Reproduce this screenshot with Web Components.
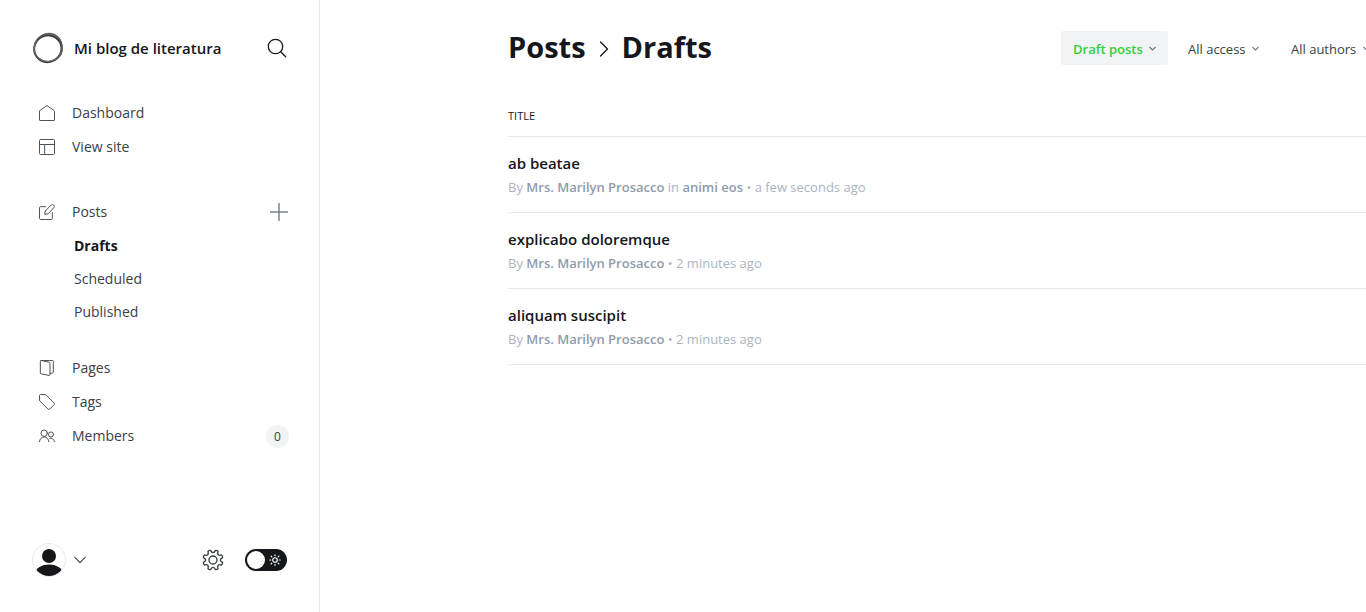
<!DOCTYPE html>
<html lang="es">
<head>
<meta charset="utf-8">
<meta name="viewport" content="width=device-width, initial-scale=1">
<title>Posts – Drafts</title>
<style>
  html, body { height: 100%; margin: 0; }
  body {
    --ink: #15171a; --text: #394047; --muted: #abb4be; --strong: #8e9cac;
    --line: #e6e9eb; --soft: #f1f3f4; --green: #30cf43;
    font-family: "Open Sans", "Noto Sans", sans-serif;
    font-size: 14px; line-height: 20px; color: var(--text); background: #fff;
    overflow: hidden;
  }
</style>
</head>
<body>
<admin-shell>
  <side-bar slot="side">
    <blog-brand slot="top">Mi blog de literatura</blog-brand>
    <nav-group>
      <nav-item icon="home">Dashboard</nav-item>
      <nav-item icon="layout">View site</nav-item>
    </nav-group>
    <nav-group>
      <nav-item icon="pen">Posts<add-button slot="end"></add-button></nav-item>
      <nav-item sub current>Drafts</nav-item>
      <nav-item sub>Scheduled</nav-item>
      <nav-item sub>Published</nav-item>
    </nav-group>
    <nav-group>
      <nav-item icon="pages">Pages</nav-item>
      <nav-item icon="tag">Tags</nav-item>
      <nav-item icon="members">Members<count-badge slot="end">0</count-badge></nav-item>
    </nav-group>
    <user-bar slot="bottom"></user-bar>
  </side-bar>
  <page-header>
    <filter-select slot="filters" active label="Draft posts" name="Type"></filter-select>
    <filter-select slot="filters" label="All access" name="Access"></filter-select>
    <filter-select slot="filters" label="All authors" name="Author"></filter-select>
  </page-header>
  <posts-table></posts-table>
</admin-shell>

<script>
const define = (name, html, setup) => {
  const template = document.createElement('template');
  template.innerHTML = html;
  customElements.define(name, class extends HTMLElement {
    connectedCallback() {
      if (this.shadowRoot) return;
      const root = this.attachShadow({ mode: 'open' });
      root.append(template.content.cloneNode(true));
      if (setup) setup(this, root);
    }
  });
};

const icons = {
  home: '<path d="M.75 9.8v12.7c0 .5.3.75.75.75h21c.5 0 .75-.3.75-.75V9.8c0-.7-.3-1.3-.9-1.8L12 .9 1.65 8c-.6.5-.9 1.1-.9 1.8z"/>',
  layout: '<rect x=".75" y=".75" width="22.5" height="22.5" rx="1.5"/><path d="M.75 8.25h22.5M8.5 8.25v15"/>',
  pen: '<path d="M10 4H2.25C1.4 4 .75 4.7.75 5.5v16.25c0 .8.7 1.5 1.5 1.5H18.5c.8 0 1.5-.7 1.5-1.5V13M13.6 14.7l-5 .8.8-5 9-9a2.6 2.6 0 0 1 3.8 0l.1.1a2.6 2.6 0 0 1 0 3.8z"/>',
  pages: '<path d="M3 .75h12.5l5 .1c.6 0 1 .4 1 1v16.3c0 .8-.5 1.4-1.3 1.5l-3.2.5M3 .75c-.6 0-1 .4-1 1v17.7c0 .7.4 1.2 1 1.3l12 2.4c.8.1 1.5-.4 1.5-1.2V5c0-.8-.5-1.4-1.2-1.6z"/>',
  tag: '<path d="M.75 9V2.25c0-.8.7-1.5 1.5-1.5H9c.7 0 1.3.3 1.8.8l11.9 12c.7.7.7 1.7 0 2.4l-6.7 6.7c-.7.7-1.7.7-2.4 0l-12-11.9C1 10.300.75 9.700.75 9z"/>',
  members: '<circle cx="7.800" cy="7.800" r="4.800"/><path d="M.75 20.500a7 7 0 0 1 14 0"/><circle cx="18" cy="9.700" r="3.800"/><path d="M16 15.300a5.800 5.800 0 0 1 7.250 5.200"/>'
};
const chevron = '<path d="M1 1l6 6 6-6"/>';

define('admin-shell', `
  <style>
    :host { display: grid; grid-template-columns: 320px minmax(0, 1fr); min-height: 100vh; }
    main { padding: 26px 0 0 188px; min-width: 0; overflow: hidden; }
    .content { margin-right: -16px; }
  </style>
  <slot name="side"></slot>
  <main><div class="content"><slot></slot></div></main>`);

define('side-bar', `
  <style>
    :host { display: flex; flex-direction: column; box-sizing: border-box;
      padding: 32px 32px 35px; border-right: 1px solid var(--line); }
    nav { display: flex; flex-direction: column; flex: 1; margin: 32px -2px 0 0; }
  </style>
  <slot name="top"></slot>
  <nav aria-label="Main"><slot></slot></nav>
  <slot name="bottom"></slot>`);

define('blog-brand', `
  <style>
    :host { display: flex; align-items: center; height: 32px; gap: 10px;
      font-size: 15px; font-weight: 600; color: var(--ink); }
    .name { flex: 1; white-space: nowrap; }
    button { display: flex; padding: 0; border: 0; background: none; color: var(--ink); }
    svg { display: block; fill: none; stroke: currentColor; }
  </style>
  <svg width="32" height="32" viewBox="0 0 32 32" aria-hidden="true">
    <path fill="#aaa" stroke="none" d="M11 3.500C18-.5 27 2 29.500 9c2 7 2 13-2 17 1.500-6 2-10 0-15C25 6 18 3 11 3.500z"/>
    <ellipse cx="15.500" cy="16.500" rx="13.800" ry="13.300" transform="rotate(-30 16 16)" stroke="#3c3c3c" stroke-width="2"/>
    <ellipse cx="16.500" cy="15.700" rx="14.200" ry="13.600" transform="rotate(-50 16 16)" stroke="#6a6a6a" stroke-width="1.200"/>
    <path stroke="#555" d="M6 7C13-1 26 0 29.500 11c2 7 0 12-4 15.500"/>
  </svg>
  <span class="name"><slot></slot></span>
  <button type="button" aria-label="Search">
    <svg width="20" height="20" viewBox="0 0 20 20" stroke-width="1.300"><circle cx="8.500" cy="8.500" r="7.200"/><path d="M13.700 13.700l5 5" stroke-linecap="round"/></svg>
  </button>`);

define('nav-group', `
  <style>
    :host { display: flex; flex-direction: column; }
    :host(:nth-of-type(2)) { margin-top: 31px; }
    :host(:nth-of-type(3)) { margin-top: 23px; }
  </style><slot></slot>`);

define('nav-item', `
  <style>
    :host { display: flex; align-items: center; height: 34px; }
    a { display: flex; flex: 1; align-items: center; gap: 17px; padding-left: 7px;
      color: var(--text); text-decoration: none; }
    svg { width: 16px; height: 16px; fill: none; stroke: #4b535b; stroke-width: 1.500;
      stroke-linecap: round; stroke-linejoin: round; }
    :host([sub]) { height: 33px; }
    :host([sub]) svg { display: none; }
    :host([sub]) a { padding-left: 42px; }
    :host([current]) a { font-weight: 700; color: var(--ink); }
  </style>
  <a href="#"><svg viewBox="0 0 24 24" aria-hidden="true"></svg><span><slot></slot></span></a>
  <slot name="end"></slot>`,
  (host, root) => {
    root.querySelector('svg').innerHTML = icons[host.getAttribute('icon')] || '';
    if (host.hasAttribute('current')) root.querySelector('a').setAttribute('aria-current', 'page');
  });

define('add-button', `
  <style>
    :host { display: block; }
    button { display: block; padding: 0; border: 0; background: none; }
    svg { display: block; stroke: #7c8289; stroke-width: 1.500; }
  </style>
  <button type="button" aria-label="New post"><svg width="20" height="18" viewBox="0 0 20 18"><path d="M10 0v18M1 9h18"/></svg></button>`);

define('count-badge', `
  <style>
    :host { display: block; min-width: 23px; border-radius: 12px; background: var(--soft);
      font-size: 12px; line-height: 23px; text-align: center; }
  </style><slot></slot>`);

define('user-bar', `
  <style>
    :host { display: flex; align-items: center; height: 34px; }
    button { display: flex; align-items: center; gap: 8px; padding: 0; border: 0; background: none; color: var(--text); }
    .gear { margin-left: auto; margin-right: 21px; }
    svg { display: block; }
    .stroke { fill: none; stroke: currentColor; stroke-linecap: round; stroke-linejoin: round; }
    label { display: grid; align-items: center; }
    input, label svg { grid-area: 1 / 1; }
    input { appearance: none; display: flex; align-items: center; box-sizing: border-box; width: 42px; height: 22px; margin: 0;
      padding: 2px; border-radius: 11px; background: var(--ink); }
    input::before { content: ""; width: 18px; height: 18px; border-radius: 50%; background: #fff; }
    input:checked { justify-content: flex-end; }
    label svg { justify-self: end; margin-right: 6px; pointer-events: none; color: #fff; }
  </style>
  <button type="button" aria-label="Account menu">
    <svg width="34" height="34" viewBox="0 0 34 34"><clipPath id="c"><circle cx="17" cy="17" r="16"/></clipPath>
      <circle cx="17" cy="17" r="16.500" fill="#fff" stroke="#e6e9eb"/>
      <g clip-path="url(#c)" fill="#15171a"><circle cx="17" cy="13" r="7"/><ellipse cx="17" cy="30" rx="13.500" ry="8.500"/></g></svg>
    <svg class="stroke" width="12" height="8" viewBox="0 0 14 8" stroke-width="1.300">${chevron}</svg>
  </button>
  <button type="button" class="gear" aria-label="Settings">
    <svg id="gear" class="stroke" width="22" height="22" viewBox="0 0 24 24" stroke-width="1.500"><path/><circle cx="12" cy="12" r="4.400"/></svg>
  </button>
  <label><input type="checkbox" role="switch" aria-label="Night shift">
    <svg class="stroke" width="12" height="12" viewBox="0 0 24 24" stroke-width="2.400"><circle cx="12" cy="12" r="4.500"/><path d="M12 1.500v2M12 20.500v2M1.500 12h2M20.500 12h2M4.200 4.200l1.500 1.500M18.300 18.300l1.500 1.500M4.200 19.800l1.500-1.500M18.300 5.700l1.500-1.500"/></svg>
  </label>`,
  (host, root) => {
    // Eight rounded teeth around the hub, joined by concave curves.
    const at = (r, deg) => {
      const a = deg * Math.PI / 180;
      return (12 + r * Math.sin(a)).toFixed(2) + ' ' + (12 - r * Math.cos(a)).toFixed(2);
    };
    let d = '';
    for (let i = 0; i < 8; i++) {
      const m = i * 45 + 22.5;
      d += (i ? 'L' : 'M') + at(10.8, m - 8) + 'Q' + at(11.6, m) + ' ' + at(10.8, m + 8) +
        'C' + at(7.4, m + 13) + ' ' + at(7.4, m + 32) + ' ' + at(10.8, m + 37);
    }
    root.querySelector('#gear path').setAttribute('d', d + 'Z');
  });

define('page-header', `
  <style>
    :host { display: flex; justify-content: space-between; height: 44px; }
    h1 { display: flex; align-items: center; gap: 13px; margin: 0; font-size: 29px; line-height: 40px; height: 42px; font-weight: 700; color: var(--ink); }
    h1 a { color: inherit; text-decoration: none; }
    svg { display: block; margin-top: 4px; fill: none; stroke: var(--ink); stroke-width: 1.300; stroke-linecap: round; stroke-linejoin: round; }
    div { display: flex; align-items: center; gap: 8px; }
  </style>
  <h1><a href="#">Posts</a><svg width="10" height="16" viewBox="0 0 10 16" aria-hidden="true"><path d="M1.500 1l7 7-7 7"/></svg><span>Drafts</span></h1>
  <div><slot name="filters"></slot></div>`);

define('filter-select', `
  <style>
    :host { display: grid; align-items: center; border-radius: 3px; font-size: 13px; }
    select { appearance: none; height: 34px; margin: 0; padding: 2px 25px 0 12px; border: 0; border-radius: 3px;
      background: none; color: inherit; font: inherit; }
    select, svg { grid-area: 1 / 1; }
    svg { justify-self: end; margin-right: 12px; fill: none; stroke: #6a7683; stroke-width: 2.200; pointer-events: none; }
    :host([active]) { background: var(--soft); color: var(--green); font-weight: 600; }
  </style>
  <select><option></option></select>
  <svg width="7" height="5" viewBox="0 0 14 8" aria-hidden="true">${chevron}</svg>`,
  (host, root) => {
    root.querySelector('option').textContent = host.getAttribute('label');
    root.querySelector('select').setAttribute('aria-label', host.getAttribute('name'));
  });

define('posts-table', `
  <style>
    :host { display: block; margin-top: 26px; }
    table { width: 100%; border-collapse: separate; border-spacing: 0; }
    th, td { padding: 0; text-align: left; border-bottom: 1px solid var(--line); }
    th { height: 40px; font-size: 11px; font-weight: 400; color: var(--ink); text-transform: uppercase; }
    td { height: 75px; }
    h3 { margin: 0; font-size: 15px; line-height: 24px; font-weight: 600; color: var(--ink); }
    h3 a { color: inherit; text-decoration: none; }
    p { margin: 0; font-size: 13px; line-height: 24px; color: var(--muted); }
    b { font-weight: 600; color: var(--strong); }
  </style>
  <table><thead><tr><th scope="col">Title</th></tr></thead><tbody></tbody></table>`,
  (host, root) => {
    const posts = [
      { title: 'ab beatae', tag: 'animi eos', when: 'a few seconds ago' },
      { title: 'explicabo doloremque', when: '2 minutes ago' },
      { title: 'aliquam suscipit', when: '2 minutes ago' }
    ];
    root.querySelector('tbody').innerHTML = posts.map(p => `
      <tr><td><h3><a href="#">${p.title}</a></h3>
      <p>By <b>Mrs. Marilyn Prosacco</b>${p.tag ? ` in <b>${p.tag}</b>` : ''} • ${p.when}</p></td></tr>`).join('');
  });
</script>
</body>
</html>
